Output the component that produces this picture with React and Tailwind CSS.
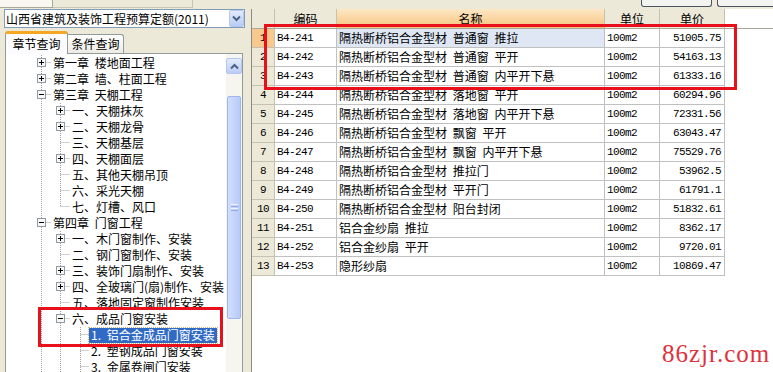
import React from "react";

// 字体：中文用 Noto Sans CJK，数字/编码用等宽字体模拟宋体的半角宽度
const cjk = "font-['Noto_Sans_CJK_SC','Noto_Sans',sans-serif] text-[12px]";
const mono = "font-['Liberation_Mono',monospace] text-[11px] tracking-[-0.6px]";

const tree = [
  { t: "第一章 楼地面工程", l: 1, box: "+" },
  { t: "第二章 墙、柱面工程", l: 1, box: "+" },
  { t: "第三章 天棚工程", l: 1, box: "-" },
  { t: "一、天棚抹灰", l: 2, box: "+" },
  { t: "二、天棚龙骨", l: 2, box: "+" },
  { t: "三、天棚基层", l: 2 },
  { t: "四、天棚面层", l: 2, box: "+" },
  { t: "五、其他天棚吊顶", l: 2 },
  { t: "六、采光天棚", l: 2 },
  { t: "七、灯槽、风口", l: 2, last: true },
  { t: "第四章 门窗工程", l: 1, box: "-" },
  { t: "一、木门窗制作、安装", l: 2, box: "+" },
  { t: "二、钢门窗制作、安装", l: 2 },
  { t: "三、装饰门扇制作、安装", l: 2, box: "+" },
  { t: "四、全玻璃门(扇)制作、安装", l: 2, box: "+" },
  { t: "五、落地固定窗制作安装", l: 2 },
  { t: "六、成品门窗安装", l: 2, box: "-" },
  { t: "1. 铝合金成品门窗安装", l: 3, sel: true },
  { t: "2. 塑钢成品门窗安装", l: 3 },
  { t: "3. 金属卷闸门安装", l: 3 },
];

const rows = [
  ["B4-241", "隔热断桥铝合金型材 普通窗 推拉", "100m2", "51005.75"],
  ["B4-242", "隔热断桥铝合金型材 普通窗 平开", "100m2", "54163.13"],
  ["B4-243", "隔热断桥铝合金型材 普通窗 内平开下悬", "100m2", "61333.16"],
  ["B4-244", "隔热断桥铝合金型材 落地窗 平开", "100m2", "60294.96"],
  ["B4-245", "隔热断桥铝合金型材 落地窗 内平开下悬", "100m2", "72331.56"],
  ["B4-246", "隔热断桥铝合金型材 飘窗 平开", "100m2", "63043.47"],
  ["B4-247", "隔热断桥铝合金型材 飘窗 内平开下悬", "100m2", "75529.76"],
  ["B4-248", "隔热断桥铝合金型材 推拉门", "100m2", "53962.5"],
  ["B4-249", "隔热断桥铝合金型材 平开门", "100m2", "61791.1"],
  ["B4-250", "隔热断桥铝合金型材 阳台封闭", "100m2", "51832.61"],
  ["B4-251", "铝合金纱扇 推拉", "100m2", "8362.17"],
  ["B4-252", "铝合金纱扇 平开", "100m2", "9720.01"],
  ["B4-253", "隐形纱扇", "100m2", "10869.47"],
];

// 树的连线位置（相对树内容区左边）
const GX = [0, 35.5, 54.5, 74.5];
const TX = [0, 45, 64, 83];

const Dot = (props) => (
  <line stroke="#a0a0a0" strokeWidth="1" strokeDasharray="1 1" {...props} />
);

const TreeLines = ({ item }) => {
  const gx = GX[item.l];
  return (
    <svg width={TX[item.l]} height="16" className="shrink-0">
      <Dot x1={GX[1]} y1="0" x2={GX[1]} y2="16" />
      {item.l === 3 && <Dot x1={GX[2]} y1="0" x2={GX[2]} y2="16" />}
      {item.l > 1 && <Dot x1={gx} y1="0" x2={gx} y2={item.last ? 8 : 16} />}
      <Dot x1={gx} y1="7.5" x2={TX[item.l]} y2="7.5" />
      {item.box && (
        <g>
          <rect x={gx - 4} y="3.5" width="8" height="8" fill="#f7f7f4" stroke="#8e9aa6" />
          <line x1={gx - 2.5} y1="7.5" x2={gx + 2.5} y2="7.5" stroke="#000" />
          {item.box === "+" && (
            <line x1={gx} y1="5" x2={gx} y2="10" stroke="#000" />
          )}
        </g>
      )}
    </svg>
  );
};

const Chevron = ({ up }) => (
  <svg width="9" height="7" viewBox="0 0 9 7">
    <path
      d={up ? "M1 5.5 L4.5 2 L8 5.5" : "M1 1.5 L4.5 5 L8 1.5"}
      stroke="#4d6185"
      strokeWidth="2"
      fill="none"
    />
  </svg>
);

const App = () => {
  return (
    <div className={`relative w-[773px] h-[372px] overflow-hidden bg-[#ece9d8] ${cjk} text-black`}>
      {/* 顶部被截掉的工具栏 */}
      <div className="flex h-[9px]">
        <div className="w-[53px] h-[8px] bg-[#f8f7f2] border-r border-b border-[#aca899]" />
        <div className="w-[140px] h-[8px] border-r border-b border-[#c9c5b4]" />
        <div className="ml-auto flex gap-[5px] pr-0">
          <div className="w-[71px] h-[7px] rounded-b-[3px] border border-t-0 border-[#4a5564] bg-[#f3f3ef]" />
          <div className="w-[56px] h-[7px] rounded-bl-[3px] border border-t-0 border-r-0 border-[#4a5564] bg-[#f3f3ef]" />
        </div>
      </div>

      <div className="flex h-[363px]">
        {/* 左侧：定额库 + 章节树 */}
        <div className="w-[246px] flex flex-col pl-[4px]">
          <div className="h-[19px] w-[241px] flex items-center bg-white border border-[#7f9db9]">
            <span className="flex-1 pl-[1px] leading-none whitespace-nowrap">山西省建筑及装饰工程预算定额(2011)</span>
            <div className="w-[15px] h-[17px] flex items-center justify-center rounded-[2px] border border-[#b5c6ee] bg-gradient-to-b from-[#e3ebfd] to-[#b9cbf5]">
              <Chevron />
            </div>
          </div>

          <div className="h-[25px] flex items-end pl-[1px] relative z-10">
            <div className="w-[63px] h-[23px] -mb-px flex items-center justify-center bg-[#fcfcfe] border border-b-0 border-[#919b9c] border-t-[3px] border-t-[#f5a623] rounded-t-[3px]">
              <span className="leading-none">章节查询</span>
            </div>
            <div className="w-[56px] h-[19px] flex items-center justify-center bg-gradient-to-b from-white to-[#ecebe5] border border-b-0 border-l-0 border-[#919b9c] rounded-tr-[3px]">
              <span className="leading-none">条件查询</span>
            </div>
          </div>

          <div className="flex-1 ml-[1px] w-[238px] flex bg-white border border-b-0 border-[#919b9c] overflow-hidden">
            <div className="flex-1 overflow-hidden pt-[1px]">
              {tree.map((item, i) => (
                <div key={i} className="h-[16px] flex items-center whitespace-nowrap">
                  <TreeLines item={item} />
                  <span
                    className={`h-[15px] flex items-center px-[2px] leading-none [word-spacing:3px] ${
                      item.sel ? "bg-[#316ac5] text-white outline outline-1 outline-dotted outline-[#c9b888]" : ""
                    }`}
                  >
                    {item.t}
                  </span>
                </div>
              ))}
            </div>
            {/* 滚动条 */}
            <div className="w-[16px] shrink-0 flex flex-col bg-[#f6f5f0] pt-[4px]">
              <div className="h-[16px] w-[16px] flex items-center justify-center rounded-[2px] border border-[#b5c6ee] bg-gradient-to-b from-[#e3ebfd] to-[#bccdf5]">
                <Chevron up />
              </div>
              <div className="h-[22px]" />
              <div className="h-[223px] w-[14px] ml-[1px] rounded-[2px] border border-[#9fb6ea] bg-gradient-to-r from-[#d2defd] to-[#b6caf8] flex flex-col items-center justify-center gap-[1px]">
                <div className="w-[7px] h-[1px] bg-[#eef3ff]" />
                <div className="w-[7px] h-[1px] bg-[#8fa9e6]" />
                <div className="w-[7px] h-[1px] bg-[#eef3ff]" />
                <div className="w-[7px] h-[1px] bg-[#8fa9e6]" />
              </div>
            </div>
          </div>
        </div>

        {/* 分隔条 */}
        <div className="w-[5px]" />

        {/* 右侧：定额子目表格 */}
        <div className="flex-1 bg-white border-l border-[#8d8b80]">
          <div className="flex h-[20px] border-b border-[#aca899]">
            <div className="w-[23px] bg-[#ece9d8] border-r border-[#c5c2b2]" />
            <div className="w-[62px] bg-[#ece9d8] border-r border-[#c5c2b2] flex items-center justify-center">编码</div>
            <div className="w-[268px] bg-gradient-to-b from-[#fde7c4] to-[#f6c37c] border-r border-[#c5c2b2] flex items-center justify-center">名称</div>
            <div className="w-[55px] bg-[#ece9d8] border-r border-[#c5c2b2] flex items-center justify-center">单位</div>
            <div className="w-[65px] bg-[#ece9d8] border-r border-[#c5c2b2] flex items-center justify-center">单价</div>
          </div>
          {rows.map((r, i) => (
            <div key={r[0]} className="flex h-[19px]">
              <div
                className={`w-[23px] border-r border-b border-[#c5c2b2] flex items-center justify-center ${mono} ${
                  i === 0 ? "bg-[#f7c98d]" : "bg-[#ece9d8]"
                }`}
              >
                {i + 1}
              </div>
              <div className={`w-[62px] border-r border-b border-[#c0c0c0] flex items-center pl-[2px] ${mono}`}>{r[0]}</div>
              <div
                className={`w-[268px] border-r border-b border-[#c0c0c0] flex items-center pl-[2px] whitespace-nowrap [word-spacing:3px] ${
                  i === 0 ? "bg-[#dfe7f5]" : ""
                }`}
              >
                {r[1]}
              </div>
              <div className={`w-[55px] border-r border-b border-[#c0c0c0] flex items-center pl-[2px] ${mono}`}>{r[2]}</div>
              <div className={`w-[65px] border-r border-b border-[#c0c0c0] flex items-center justify-end pr-[3px] ${mono}`}>{r[3]}</div>
            </div>
          ))}
        </div>
      </div>

      {/* 红色标注框 */}
      <div className="absolute left-[264px] top-[24px] w-[473px] h-[66px] border-[3px] border-[#e8101a] pointer-events-none" />
      <div className="absolute left-[38px] top-[307px] w-[185px] h-[40px] border-[3px] border-[#e8101a] pointer-events-none" />

      {/* 水印 */}
      <div className="absolute left-[662px] top-[341px] font-['Liberation_Serif',serif] text-[25px] tracking-[1px] leading-none text-[#e0323c]">
        86zjr.com
      </div>
    </div>
  );
};

export default App;
